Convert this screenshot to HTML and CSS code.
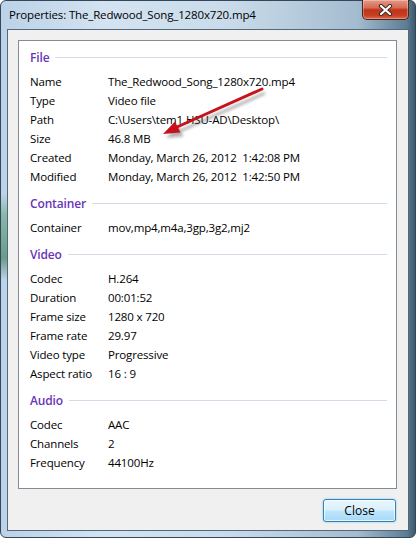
FILE: index.html
```html
<!DOCTYPE html>
<html>
<head>
    <meta charset="UTF-8">
    <title>Properties: The_Redwood_Song_1280x720.mp4</title>
    <link rel="stylesheet" href="styles.css">
</head>
<body>
    <div class="window">
        <div class="titlebar">
            <span class="title">Properties: The_Redwood_Song_1280x720.mp4</span>
            <button class="caption-close" title="Close">
                <svg width="15" height="12" viewBox="0 0 15 12">
                    <path d="M3 2 L12 10 M12 2 L3 10" stroke="#3b2a2a" stroke-width="4.2" stroke-linecap="round"/>
                    <path d="M3 2 L12 10 M12 2 L3 10" stroke="#ffffff" stroke-width="2.2" stroke-linecap="round"/>
                </svg>
            </button>
        </div>
        <div class="client">
            <div class="panel">
                <div class="group">
                    <div class="group-head"><span>File</span><i></i></div>
                    <div class="row"><span>Name</span><span>The_Redwood_Song_1280x720.mp4</span></div>
                    <div class="row"><span>Type</span><span>Video file</span></div>
                    <div class="row"><span>Path</span><span>C:\Users\tem1.HSU-AD\Desktop\</span></div>
                    <div class="row"><span>Size</span><span>46.8 MB</span></div>
                    <div class="row"><span>Created</span><span>Monday, March 26, 2012 &nbsp;1:42:08 PM</span></div>
                    <div class="row"><span>Modified</span><span>Monday, March 26, 2012 &nbsp;1:42:50 PM</span></div>
                </div>
                <div class="group">
                    <div class="group-head"><span>Container</span><i></i></div>
                    <div class="row"><span>Container</span><span>mov,mp4,m4a,3gp,3g2,mj2</span></div>
                </div>
                <div class="group">
                    <div class="group-head"><span>Video</span><i></i></div>
                    <div class="row"><span>Codec</span><span>H.264</span></div>
                    <div class="row"><span>Duration</span><span>00:01:52</span></div>
                    <div class="row"><span>Frame size</span><span>1280 x 720</span></div>
                    <div class="row"><span>Frame rate</span><span>29.97</span></div>
                    <div class="row"><span>Video type</span><span>Progressive</span></div>
                    <div class="row"><span>Aspect ratio</span><span>16 : 9</span></div>
                </div>
                <div class="group">
                    <div class="group-head"><span>Audio</span><i></i></div>
                    <div class="row"><span>Codec</span><span>AAC</span></div>
                    <div class="row"><span>Channels</span><span>2</span></div>
                    <div class="row"><span>Frequency</span><span>44100Hz</span></div>
                </div>
            </div>
            <div class="buttons">
                <button class="btn">Close</button>
            </div>
        </div>
    </div>

    <!-- red annotation arrow drawn over the dialog -->
    <svg class="arrow" width="416" height="538" viewBox="0 0 416 538">
        <defs>
            <filter id="soft" x="-20%" y="-20%" width="140%" height="140%">
                <feGaussianBlur stdDeviation="1.6"/>
            </filter>
        </defs>
        <g transform="translate(3,4)" filter="url(#soft)" opacity="0.45">
            <line x1="262" y1="89" x2="177" y2="127" stroke="#555" stroke-width="3"/>
            <polygon points="163,134 175,121.5 180.5,132.5" fill="#555"/>
        </g>
        <line x1="262" y1="89" x2="177" y2="127" stroke="#c8121b" stroke-width="3" stroke-linecap="round"/>
        <polygon points="163,134 175,121.5 180.5,132.5" fill="#c8121b"/>
    </svg>
</body>
</html>
```

FILE: styles.css
```css
html, body {
    margin: 0;
    padding: 0;
}

body {
    position: relative;
    width: 416px;
    height: 538px;
    background: #ffffff;
    font-family: "Open Sans", "Noto Sans", sans-serif;
    font-size: 11.5px;
    letter-spacing: -0.15px;
    color: #000;
    overflow: hidden;
}

.window {
    box-sizing: border-box;
    width: 416px;
    height: 538px;
    border: 1px solid #34475a;
    border-radius: 6px;
    padding: 0 6px 6px 6px;
    display: flex;
    flex-direction: column;
    background:
        linear-gradient(180deg, rgba(255,255,255,0) 0, rgba(255,255,255,0) 36%, rgba(70,150,90,0.45) 40%, rgba(40,110,60,0.55) 48%, rgba(255,255,255,0) 52%) 0 0 / 8px 100% no-repeat,
        linear-gradient(90deg, #bcd2e8 0, #d3e3f1 25%, #c9dbea 55%, #b2c8da 75%, #a4bcd0 86%, #5d7d93 98%, #3d5a6e 100%);
}

.titlebar {
    height: 28px;
    display: flex;
    align-items: flex-start;
    padding-left: 2px;
}

.title {
    margin-top: 6px;
    line-height: 16px;
    white-space: nowrap;
}

.caption-close {
    margin-left: auto;
    margin-top: -1px;
    width: 47px;
    height: 20px;
    padding: 0;
    border: 1px solid #4f2418;
    border-top: none;
    border-radius: 0 0 5px 5px;
    background: linear-gradient(180deg, #e49a88 0, #d66c53 40%, #c0331a 52%, #c63d21 80%, #d66a50 100%);
    box-shadow: inset 0 0 0 1px rgba(255,255,255,0.3);
    display: flex;
    align-items: center;
    justify-content: center;
}

.client {
    flex: 1;
    display: flex;
    flex-direction: column;
    background: #f0f0f0;
    border: 1px solid #52687b;
    padding: 10px 11px 8px 10px;
}

.panel {
    flex: 1;
    background: #ffffff;
    border: 1px solid #838b95;
    padding: 7px 9px 0 11px;
}

.group + .group {
    margin-top: 8px;
}

.group-head {
    display: flex;
    align-items: center;
    height: 19px;
    margin-bottom: 5px;
    color: #6a34b8;
    font-weight: 600;
    font-size: 12px;
}

.group-head i {
    flex: 1;
    height: 1px;
    margin-left: 6px;
    background: #d3dce7;
}

.row {
    display: grid;
    grid-template-columns: 78px 1fr;
    height: 19px;
    line-height: 19px;
    white-space: nowrap;
}

.buttons {
    display: flex;
    justify-content: flex-end;
    padding-top: 10px;
    padding-right: 1px;
}

.btn {
    width: 73px;
    height: 23px;
    font-family: inherit;
    font-size: 12px;
    color: #000;
    border: 1px solid #3c7fb1;
    border-radius: 3px;
    background: linear-gradient(180deg, #eaf6fd 0, #d9f0fc 48%, #bee6fd 52%, #a7d9f5 100%);
    box-shadow: inset 0 0 0 1px rgba(255,255,255,0.7), 0 0 2px #48c8f5;
    padding: 0;
}

.arrow {
    position: absolute;
    top: 0;
    left: 0;
    pointer-events: none;
}
```
